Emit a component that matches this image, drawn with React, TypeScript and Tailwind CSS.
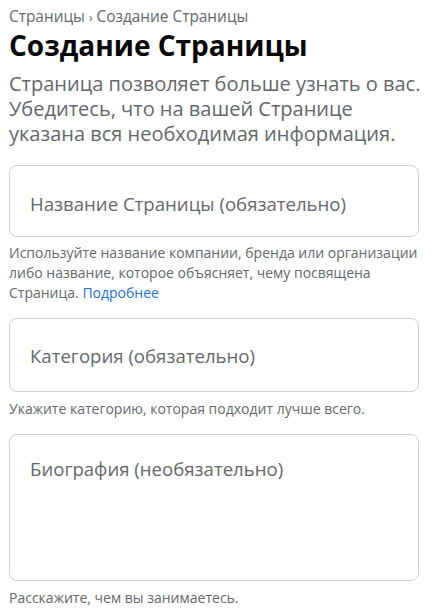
import React from 'react';

const fieldBox =
  'w-full rounded-lg border border-[#ccd0d5] bg-white px-5 text-[18.6px] text-[#65676b] outline-none placeholder:text-[#65676b]';

const App = () => {
  return (
    <div
      className="min-h-screen bg-white pl-[9px] pr-[18px] pt-[7px] text-[#65676b]"
      style={{ fontFamily: '"Open Sans", "Noto Sans", sans-serif' }}
    >
      {/* Хлебные крошки */}
      <div className="text-[15.4px] leading-[20px]">
        Страницы <span className="text-[12px]">›</span> Создание Страницы
      </div>

      <h1 className="mt-0 text-[28px] font-bold leading-[34px] text-[#050505]">Создание Страницы</h1>

      <p className="mt-[9px] mr-[-9px] text-[20px] leading-[25px]">
        Страница позволяет больше узнать о вас. Убедитесь, что на вашей Странице указана вся необходимая информация.
      </p>

      <div className="mt-[19px]">
        <input className={`${fieldBox} h-[72px] pt-[5px]`} placeholder="Название Страницы (обязательно)" />
        <p className="mt-[6px] mr-[-9px] text-[14px] leading-[20px]">
          Используйте название компании, бренда или организации либо название, которое объясняет, чему посвящена
          Страница. <span className="text-[#216fdb]">Подробнее</span>
        </p>
      </div>

      <div className="mt-[15px]">
        <input className={`${fieldBox} h-[74px]`} placeholder="Категория (обязательно)" />
        <p className="mt-[7px] text-[14px] leading-[20px]">Укажите категорию, которая подходит лучше всего.</p>
      </div>

      <div className="mt-[15px]">
        <textarea
          className={`${fieldBox} block h-[147px] resize-none pt-[21px] leading-[26px]`}
          placeholder="Биография (необязательно)"
        />
        <p className="mt-[7px] text-[14px] leading-[20px]">Расскажите, чем вы занимаетесь.</p>
      </div>
    </div>
  );
};

export default App;
